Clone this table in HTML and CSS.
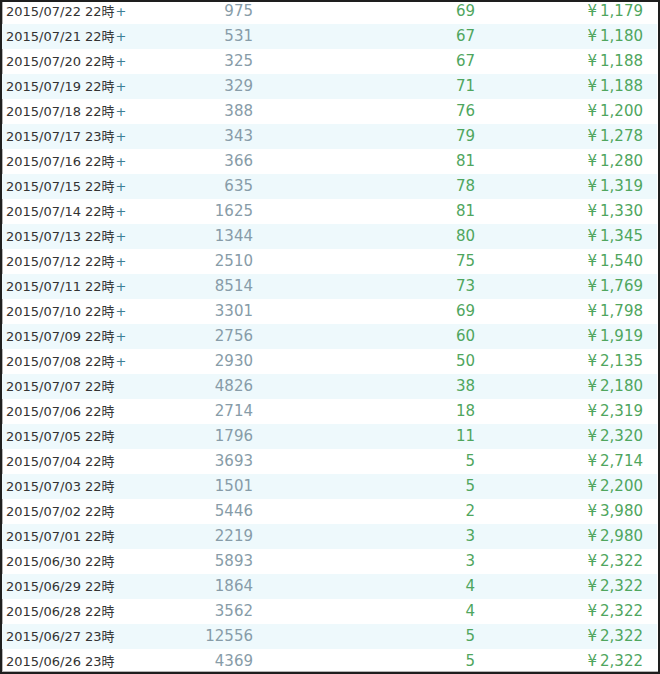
FILE: index.html
```html
<!DOCTYPE html>
<html lang="ja">
<head>
<meta charset="utf-8">
<link rel="stylesheet" href="styles.css">
</head>
<body>
<div class="frame">
<table class="log">
<colgroup><col class="c-date"><col class="c-views"><col class="c-rank"><col class="c-price"></colgroup>
<tbody>
<tr><td class="date">2015/07/22 22時<span class="plus">+</span></td><td class="views">975</td><td class="rank">69</td><td class="price"><span class="yen">¥</span>1,179</td></tr>
<tr><td class="date">2015/07/21 22時<span class="plus">+</span></td><td class="views">531</td><td class="rank">67</td><td class="price"><span class="yen">¥</span>1,180</td></tr>
<tr><td class="date">2015/07/20 22時<span class="plus">+</span></td><td class="views">325</td><td class="rank">67</td><td class="price"><span class="yen">¥</span>1,188</td></tr>
<tr><td class="date">2015/07/19 22時<span class="plus">+</span></td><td class="views">329</td><td class="rank">71</td><td class="price"><span class="yen">¥</span>1,188</td></tr>
<tr><td class="date">2015/07/18 22時<span class="plus">+</span></td><td class="views">388</td><td class="rank">76</td><td class="price"><span class="yen">¥</span>1,200</td></tr>
<tr><td class="date">2015/07/17 23時<span class="plus">+</span></td><td class="views">343</td><td class="rank">79</td><td class="price"><span class="yen">¥</span>1,278</td></tr>
<tr><td class="date">2015/07/16 22時<span class="plus">+</span></td><td class="views">366</td><td class="rank">81</td><td class="price"><span class="yen">¥</span>1,280</td></tr>
<tr><td class="date">2015/07/15 22時<span class="plus">+</span></td><td class="views">635</td><td class="rank">78</td><td class="price"><span class="yen">¥</span>1,319</td></tr>
<tr><td class="date">2015/07/14 22時<span class="plus">+</span></td><td class="views">1625</td><td class="rank">81</td><td class="price"><span class="yen">¥</span>1,330</td></tr>
<tr><td class="date">2015/07/13 22時<span class="plus">+</span></td><td class="views">1344</td><td class="rank">80</td><td class="price"><span class="yen">¥</span>1,345</td></tr>
<tr><td class="date">2015/07/12 22時<span class="plus">+</span></td><td class="views">2510</td><td class="rank">75</td><td class="price"><span class="yen">¥</span>1,540</td></tr>
<tr><td class="date">2015/07/11 22時<span class="plus">+</span></td><td class="views">8514</td><td class="rank">73</td><td class="price"><span class="yen">¥</span>1,769</td></tr>
<tr><td class="date">2015/07/10 22時<span class="plus">+</span></td><td class="views">3301</td><td class="rank">69</td><td class="price"><span class="yen">¥</span>1,798</td></tr>
<tr><td class="date">2015/07/09 22時<span class="plus">+</span></td><td class="views">2756</td><td class="rank">60</td><td class="price"><span class="yen">¥</span>1,919</td></tr>
<tr><td class="date">2015/07/08 22時<span class="plus">+</span></td><td class="views">2930</td><td class="rank">50</td><td class="price"><span class="yen">¥</span>2,135</td></tr>
<tr><td class="date">2015/07/07 22時</td><td class="views">4826</td><td class="rank">38</td><td class="price"><span class="yen">¥</span>2,180</td></tr>
<tr><td class="date">2015/07/06 22時</td><td class="views">2714</td><td class="rank">18</td><td class="price"><span class="yen">¥</span>2,319</td></tr>
<tr><td class="date">2015/07/05 22時</td><td class="views">1796</td><td class="rank">11</td><td class="price"><span class="yen">¥</span>2,320</td></tr>
<tr><td class="date">2015/07/04 22時</td><td class="views">3693</td><td class="rank">5</td><td class="price"><span class="yen">¥</span>2,714</td></tr>
<tr><td class="date">2015/07/03 22時</td><td class="views">1501</td><td class="rank">5</td><td class="price"><span class="yen">¥</span>2,200</td></tr>
<tr><td class="date">2015/07/02 22時</td><td class="views">5446</td><td class="rank">2</td><td class="price"><span class="yen">¥</span>3,980</td></tr>
<tr><td class="date">2015/07/01 22時</td><td class="views">2219</td><td class="rank">3</td><td class="price"><span class="yen">¥</span>2,980</td></tr>
<tr><td class="date">2015/06/30 22時</td><td class="views">5893</td><td class="rank">3</td><td class="price"><span class="yen">¥</span>2,322</td></tr>
<tr><td class="date">2015/06/29 22時</td><td class="views">1864</td><td class="rank">4</td><td class="price"><span class="yen">¥</span>2,322</td></tr>
<tr><td class="date">2015/06/28 22時</td><td class="views">3562</td><td class="rank">4</td><td class="price"><span class="yen">¥</span>2,322</td></tr>
<tr><td class="date">2015/06/27 23時</td><td class="views">12556</td><td class="rank">5</td><td class="price"><span class="yen">¥</span>2,322</td></tr>
<tr><td class="date">2015/06/26 23時</td><td class="views">4369</td><td class="rank">5</td><td class="price"><span class="yen">¥</span>2,322</td></tr>
</tbody>
</table>
</div>
</body>
</html>
```
FILE: styles.css
```css
html, body {
  margin: 0;
  padding: 0;
  background: #fff;
}
.frame {
  box-sizing: border-box;
  width: 660px;
  height: 674px;
  border: 2px solid #1e1e1e;
  box-shadow: inset 1px -1px 0 #b4b4b4;
  overflow: hidden;
  font-family: "DejaVu Sans", "Noto Sans CJK JP", sans-serif;
}
.log {
  width: 655px;
  margin-top: -3px;
  border-collapse: collapse;
  table-layout: fixed;
}
.c-date { width: 138px; }
.c-views { width: 120px; }
.c-rank { width: 222px; }
.c-price { width: 175px; }
.log tr { height: 25px; }
.log tr:nth-child(even) { background: #eef9fc; }
.log td {
  padding: 0;
  height: 25px;
  line-height: 25px;
  white-space: nowrap;
  vertical-align: middle;
}
.date {
  padding-left: 4px !important;
  font-size: 13px;
  color: #333;
}
.plus {
  color: #3d7f96;
  margin-left: 1px;
}
.views {
  text-align: right;
  padding-right: 7px !important;
  font-size: 15px;
  color: #879ca8;
}
.rank {
  text-align: right;
  padding-right: 7px !important;
  font-size: 15px;
  color: #4fa65e;
}
.price {
  text-align: right;
  padding-right: 14px !important;
  font-size: 15px;
  color: #4fa65e;
}
.yen {
  margin-right: 3px;
}
```
